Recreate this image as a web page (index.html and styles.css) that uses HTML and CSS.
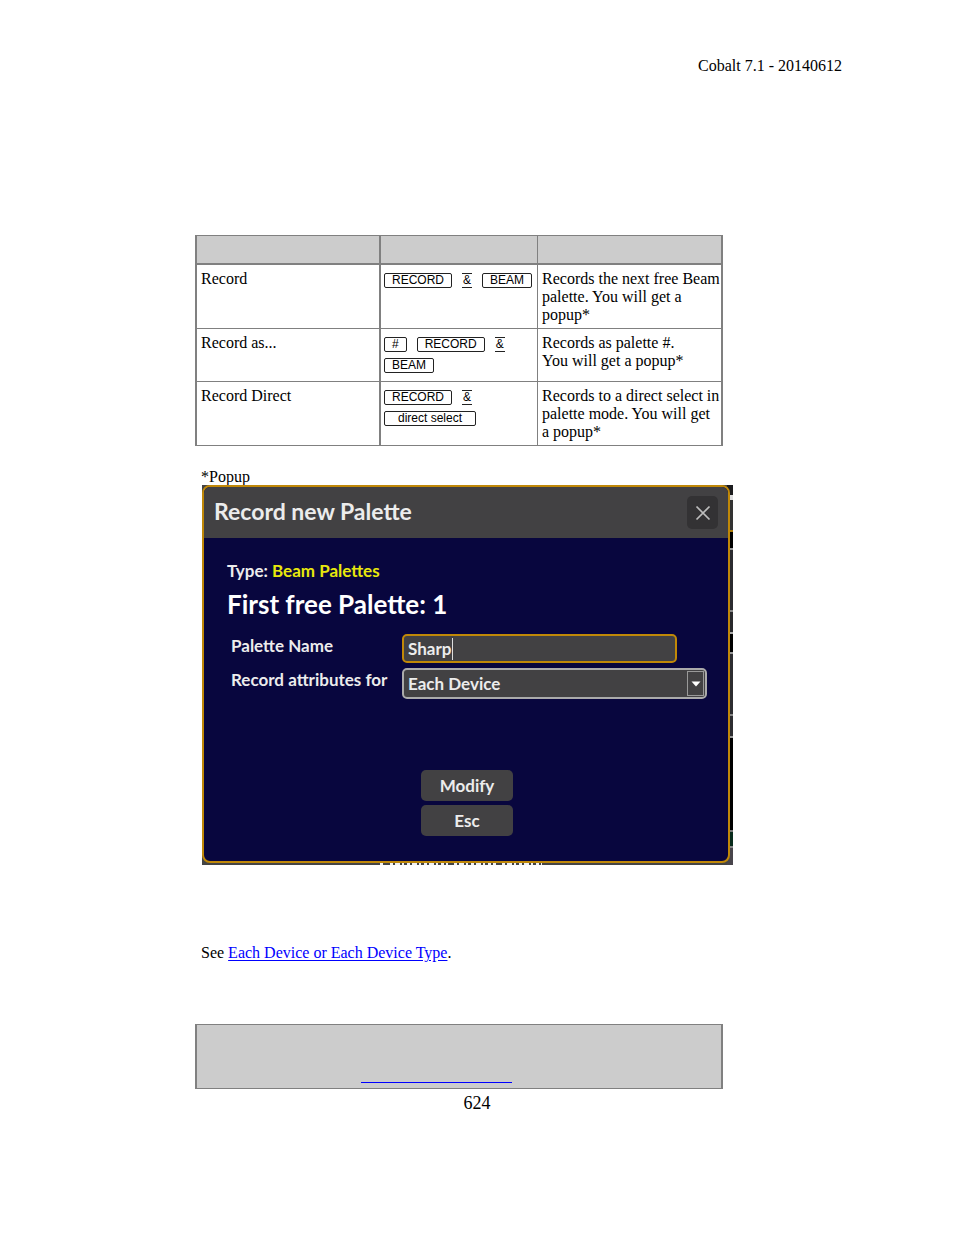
FILE: index.html
```html
<!DOCTYPE html>
<html lang="en">
<head>
<meta charset="utf-8">
<title>Cobalt 7.1 - 20140612</title>
<link rel="stylesheet" href="styles.css">
</head>
<body>
<header class="page-header">Cobalt 7.1 - 20140612</header>
<main class="content">
  <table class="commands">
    <colgroup><col class="col-action"><col class="col-keys"><col class="col-feedback"></colgroup>
    <thead><tr><th></th><th></th><th></th></tr></thead>
    <tbody>
      <tr>
        <td>Record</td>
        <td class="keys-cell"><div class="keys"><kbd class="key">RECORD</kbd><span class="amp">&amp;</span><kbd class="key">BEAM</kbd></div></td>
        <td>Records the next free Beam palette. You will get a popup*</td>
      </tr>
      <tr>
        <td>Record as...</td>
        <td class="keys-cell"><div class="keys"><kbd class="key">#</kbd><kbd class="key">RECORD</kbd><span class="amp">&amp;</span><kbd class="key">BEAM</kbd></div></td>
        <td>Records as palette #.<br>You will get a popup*</td>
      </tr>
      <tr>
        <td>Record Direct</td>
        <td class="keys-cell"><div class="keys"><kbd class="key">RECORD</kbd><span class="amp">&amp;</span><kbd class="key key-wide">direct select</kbd></div></td>
        <td>Records to a direct select in palette mode. You will get a&nbsp;popup*</td>
      </tr>
    </tbody>
  </table>

  <p class="popup-note">*Popup</p>
  <div class="backdrop">
    <section class="dialog">
      <div class="dialog-bar">
        <h2 class="dialog-title">Record new Palette</h2>
        <button class="close" type="button" aria-label="Close">
          <svg width="16" height="16" viewBox="0 0 16 16"><path d="M1.500 1.500L14.500 14.500M14.500 1.500L1.500 14.500" stroke="#bdbdbd" stroke-width="1.700" fill="none"/></svg>
        </button>
      </div>
      <form class="dialog-body">
        <p class="type">Type: <span class="type-value">Beam Palettes</span></p>
        <h3 class="free">First free Palette: 1</h3>
        <div class="fields">
          <label for="name">Palette Name</label>
          <div class="name-field"><input id="name" class="name" type="text" value="Sharp"><span class="caret"></span></div>
          <label for="attributes">Record attributes for</label>
          <div class="select-field">
            <select id="attributes" class="attributes"><option>Each Device</option></select>
            <span class="arrow"><svg width="10" height="6" viewBox="0 0 10 6"><path d="M0.500 0.500H9.500L5 5.500Z" fill="#fff"/></svg></span>
          </div>
        </div>
        <div class="actions">
          <button class="action" type="button">Modify</button>
          <button class="action" type="button">Esc</button>
        </div>
      </form>
    </section>
    <svg class="edge" width="162" height="2" viewBox="0 0 162 2"><path d="M0 1H4M10 1H68M74 1H116M122 1H162" stroke="#f2f2f2" stroke-width="2" stroke-dasharray="3 2 5 2 2 3"/></svg>
  </div>

  <p class="see">See <a class="link" href="#each-device">Each Device or Each Device Type</a>.</p>
  <div class="note"><span class="note-rule"></span></div>
</main>
<footer class="page-number">624</footer>
</body>
</html>
```

FILE: styles.css
```css
* { box-sizing: border-box; }

body {
  margin: 0;
  background: #fff;
  color: #000;
  font: 16px/18px "Liberation Serif", "Times New Roman", serif;
}

p, h2, h3 { margin: 0; }

.page-header {
  padding: 57px 112px 0 0;
  text-align: right;
}

.content { padding: 160px 231px 0 195px; }

.commands {
  width: 100%;
  table-layout: fixed;
  border-spacing: 0;
  border-top: 1px solid #808080;
  border-left: 2px solid #808080;
}
.col-action { width: 184px; }
.col-keys { width: 157px; }

.commands th {
  height: 29px;
  padding: 0;
  background: #ccc;
  border-bottom: 2px solid #808080;
}
.commands td {
  padding: 5px 0 4px 4px;
  vertical-align: top;
  border-bottom: 1px solid #808080;
}
.commands th, .commands td { border-right: 1px solid #808080; }
.commands th:first-child, .commands td:first-child,
.commands th:last-child, .commands td:last-child { border-right-width: 2px; }
.commands .keys-cell { padding: 8px 3px; }

.keys {
  display: flex;
  flex-wrap: wrap;
  gap: 6px 10px;
}
.key, .amp {
  height: 15px;
  font: 12px/13px "Liberation Sans", Arial, sans-serif;
}
.key {
  padding: 0 7px;
  border: 1px solid #222;
  border-radius: 2px;
}
.key-wide {
  min-width: 92px;
  text-align: center;
}
.amp {
  padding: 0 1px;
  border: solid #222;
  border-width: 1px 0;
}

.popup-note { padding: 22px 0 0 6px; }

.backdrop {
  position: relative;
  margin: -1px -10px 0 7px;
  padding: 0 3px 2px 0;
  background:
    linear-gradient(#1c1c1e 0 10px, #ddd 10px 15px, #333 15px 45px, #a87808 45px 47px,
      #000 47px 63px, #999 63px 65px, #2b2b30 65px 125px, #888 125px 127px, #29292c 127px 147px,
      #aaa 147px 149px, #000 149px 167px, #999 167px 169px, #2d2d31 169px 229px, #888 229px 231px,
      #2d2d31 231px 251px, #999 251px 253px, #000 253px 345px, #777 345px 347px, #082b1c 347px 361px,
      #888 361px 363px, #48454b 363px) right / 6px 100% no-repeat,
    #444;
}

.dialog {
  overflow: hidden;
  border: 2px solid #c08808;
  border-radius: 8px;
  background: #08063e;
  color: #ececec;
  font: 700 17px/20px Lato, Calibri, sans-serif;
}
.dialog-bar {
  display: flex;
  align-items: center;
  justify-content: space-between;
  height: 51px;
  padding: 0 10px;
  background: #424143;
}
.dialog-title {
  padding-bottom: 3px;
  font-size: 23px;
  line-height: 28px;
}
.close {
  display: grid;
  place-items: center;
  width: 31px;
  height: 33px;
  padding: 0;
  border: 0;
  border-radius: 5px;
  background: #333234;
}

.dialog-body { padding: 23px 21px 25px 23px; }
.type-value { color: #e8e80c; }
.free {
  margin-top: 8px;
  color: #fff;
  font-size: 26px;
  line-height: 30px;
}
.fields {
  display: grid;
  grid-template-columns: 171px 1fr;
  gap: 5px 0;
  margin-top: 15px;
  padding-left: 4px;
}
.fields label { padding-top: 2px; }
.name-field, .select-field { position: relative; }
.name-field { margin-right: 30px; }
.name, .attributes {
  display: block;
  width: 100%;
  padding: 0 4px;
  border-radius: 5px;
  background: #424143;
  color: #ececec;
  font: inherit;
  outline: 0;
}
.name { height: 29px; border: 2px solid #c08808; }
.attributes { height: 31px; border: 2px solid #aaa; appearance: none; }
.caret {
  position: absolute;
  top: 4px;
  left: 50px;
  width: 1px;
  height: 22px;
  background: #ddd;
}
.arrow {
  position: absolute;
  top: 3px;
  right: 3px;
  bottom: 3px;
  display: grid;
  place-items: center;
  width: 17px;
  border: 1px solid #999;
  pointer-events: none;
}

.actions {
  display: flex;
  flex-direction: column;
  align-items: center;
  gap: 4px;
  margin-top: 71px;
}
.action {
  width: 92px;
  height: 31px;
  padding: 0;
  border: 0;
  border-radius: 5px;
  background: #424143;
  color: #ececec;
  font: inherit;
}
.edge {
  position: absolute;
  bottom: 0;
  left: 178px;
}

.see { padding: 79px 0 0 6px; }
.link { color: #00f; text-decoration-color: #00f; text-underline-offset: 2px; }

.note {
  display: flex;
  align-items: flex-end;
  justify-content: center;
  height: 65px;
  margin-top: 62px;
  padding: 0 46px 5px 0;
  border: solid #808080;
  border-width: 1px 2px;
  background: #ccc;
}
.note-rule {
  width: 151px;
  border-bottom: 1px solid #00f;
}

.page-number {
  padding: 4px 0 100px;
  text-align: center;
  font-size: 18px;
  line-height: 20px;
}
```
